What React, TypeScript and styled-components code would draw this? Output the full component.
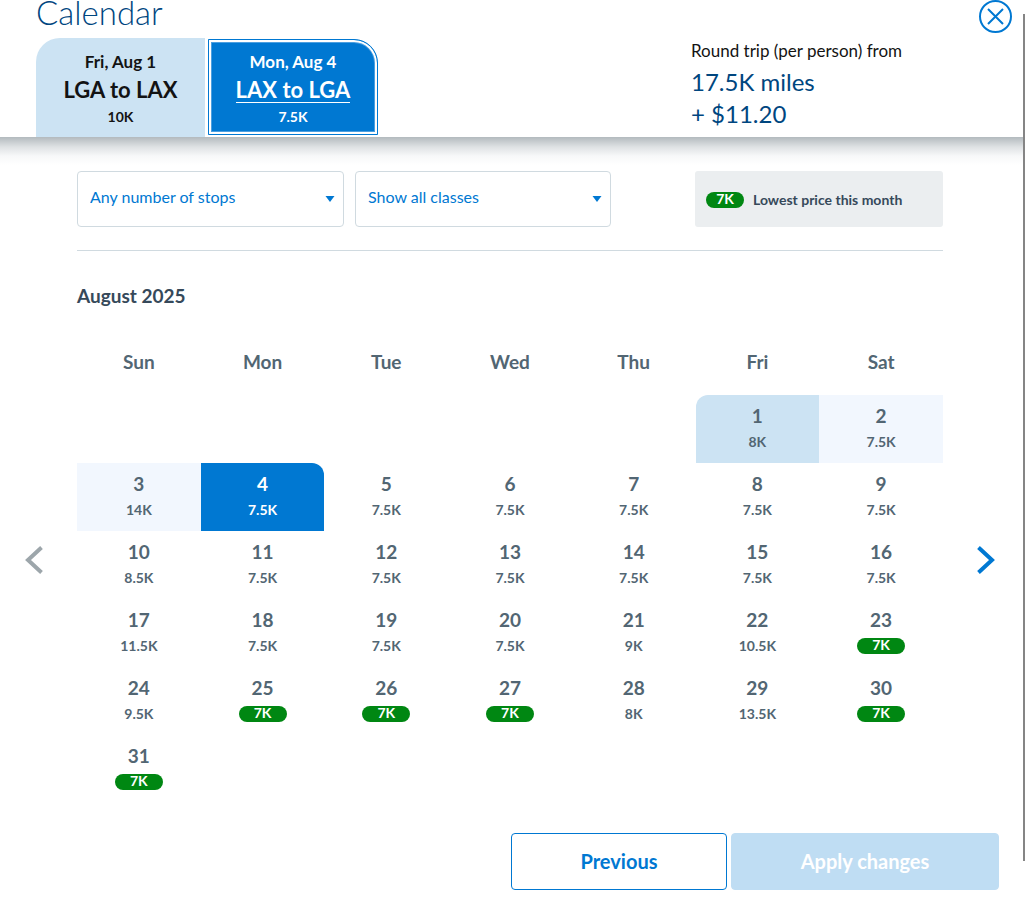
import React from "react";
import styled, { createGlobalStyle } from "styled-components";

const blue = "#0078d2";
const navy = "#00467f";
const slate = "#526673";
const ink = "#36495a";

const GlobalStyle = createGlobalStyle`
  * { box-sizing: border-box; }
  body { margin: 0; background: #fff; color: #131313; font-family: Lato, "Open Sans", sans-serif; }
  button, select { font-family: inherit; margin: 0; padding: 0; border: 0; background: none; cursor: pointer; }
`;

const Dialog = styled.div`
  position: relative;
  overflow: hidden;
`;

const Header = styled.header`
  display: flex;
  align-items: flex-start;
  padding: 0 13px 0 36px;
  background: #fff;
`;

const Heading = styled.div`
  flex: 1;
`;

const Title = styled.h1`
  margin: 0;
  padding-bottom: 14px;
  color: ${navy};
  font-size: 33px;
  font-weight: 300;
  line-height: 24px;
`;

const Tabs = styled.div`
  display: flex;
  align-items: flex-start;
  gap: 3px;
`;

const Tab = styled.button<{ $active?: boolean }>`
  width: 169px;
  height: 99px;
  padding-top: 12px;
  display: flex;
  flex-direction: column;
  align-items: center;
  color: ${(p) => (p.$active ? "#fff" : "#131313")};
  background: ${(p) => (p.$active ? blue : "#cce3f3")};
  border-radius: ${(p) => (p.$active ? "0 24px 0 0" : "24px 0 0 0")};
  ${(p) =>
    p.$active &&
    `
    width: 170px;
    height: 96px;
    margin-top: 1px;
    padding-top: 10px;
    border: 1px solid ${blue};
    box-shadow: inset 0 0 0 2px #fff, inset 0 0 0 3px #4c9fe0;
  `}
`;

const TabDate = styled.span`
  font-size: 17px;
  font-weight: 700;
  line-height: 24px;
`;

const TabRoute = styled.span<{ $active?: boolean }>`
  margin-top: 4px;
  border-bottom: 1px solid ${(p) => (p.$active ? "#fff" : "transparent")};
  font-size: 22px;
  font-weight: 700;
  line-height: 24px;
`;

const TabPrice = styled.span`
  margin-top: 4px;
  font-size: 14px;
  font-weight: 700;
  line-height: 20px;
`;

const Fare = styled.div`
  width: 288px;
  padding-top: 39px;
`;

const FareLabel = styled.div`
  font-size: 17px;
  line-height: 24px;
`;

const FareAmount = styled.div`
  padding-top: 3px;
  color: ${navy};
  font-size: 24px;
  line-height: 32px;
`;

const CloseButton = styled.button`
  width: 33px;
  height: 33px;
`;

const Glyph = styled.svg`
  display: block;
`;

const Main = styled.main`
  padding: 34px 82px 0 77px;
  background: linear-gradient(#b3babe, #dfe2e4 10px, #f7f8f9 19px, #fff 28px);
`;

const Filters = styled.div`
  display: flex;
  gap: 11px;
  padding-bottom: 23px;
  border-bottom: 1px solid #d0dae0;
`;

const Field = styled.label<{ $width: number }>`
  position: relative;
  width: ${(p) => p.$width}px;
`;

const Select = styled.select`
  appearance: none;
  width: 100%;
  height: 56px;
  padding: 0 32px 6px 12px;
  border: 1px solid #d0dae0;
  border-radius: 4px;
  background: #fff;
  color: ${blue};
  font-size: 16px;
`;

const Caret = styled.svg`
  position: absolute;
  right: 9px;
  top: 25px;
  pointer-events: none;
`;

const Legend = styled.div`
  display: flex;
  align-items: center;
  gap: 9px;
  width: 248px;
  height: 56px;
  margin-left: auto;
  padding-left: 11px;
  border-radius: 3px;
  background: #ebeef0;
  color: ${ink};
  font-size: 14px;
  font-weight: 700;
`;

const Pill = styled.span<{ $width: number }>`
  display: block;
  width: ${(p) => p.$width}px;
  height: 16px;
  margin: 0 auto;
  border-radius: 8px;
  background: #008712;
  color: #fff;
  font-size: 14px;
  font-weight: 700;
  line-height: 14px;
  text-align: center;
`;

const LegendPill = styled(Pill)`
  margin: 2px 0 0;
`;

const Month = styled.h2`
  margin: 33px 0 9px;
  color: ${ink};
  font-size: 19px;
  font-weight: 700;
  line-height: 24px;
`;

const Pager = styled.section`
  display: grid;
  grid-template-columns: 77px minmax(0, 1fr) 82px;
  align-items: center;
`;

const ArrowButton = styled.button<{ $side: "left" | "right" }>`
  justify-self: ${(p) => (p.$side === "left" ? "end" : "start")};
  margin: ${(p) => (p.$side === "left" ? "0 34px 0 0" : "0 0 0 34px")};
`;

const Grid = styled.table`
  width: 100%;
  margin-top: 13px;
  table-layout: fixed;
  border-collapse: collapse;
  color: ${slate};
`;

const Weekday = styled.th`
  height: 65px;
  padding: 0 0 2px;
  font-size: 19px;
  font-weight: 700;
`;

type DayKind = "start" | "end" | "range" | "plain";

const dayFill: Record<DayKind, string> = {
  start: "#cce3f3",
  end: blue,
  range: "#f2f7fe",
  plain: "transparent",
};

const DayCell = styled.td`
  height: 68px;
  padding: 0;
`;

const Day = styled.button<{ $kind: DayKind }>`
  display: block;
  width: 100%;
  height: 68px;
  padding: 9px 0;
  text-align: center;
  background: ${(p) => dayFill[p.$kind]};
  color: ${(p) => (p.$kind === "end" ? "#fff" : slate)};
  border-radius: ${(p) => (p.$kind === "start" ? "12px 0 0 0" : p.$kind === "end" ? "0 12px 0 0" : "0")};
`;

const DayNumber = styled.span`
  display: block;
  height: 25px;
  font-size: 19px;
  font-weight: 700;
  line-height: 24px;
`;

const DayPrice = styled.span`
  display: block;
  font-size: 14px;
  font-weight: 700;
  line-height: 25px;
`;

const DayPill = styled(Pill)`
  margin: 5px auto 4px;
`;

const Footer = styled.footer`
  display: flex;
  justify-content: flex-end;
  gap: 4px;
  padding: 30px 26px 8px;
`;

const Action = styled.button<{ $primary?: boolean }>`
  width: ${(p) => (p.$primary ? 268 : 216)}px;
  height: 57px;
  padding-bottom: 2px;
  border: 1px solid ${(p) => (p.$primary ? "#bfddf3" : blue)};
  border-radius: 4px;
  background: ${(p) => (p.$primary ? "#bfddf3" : "#fff")};
  color: ${(p) => (p.$primary ? "#fff" : blue)};
  font-size: 20px;
  font-weight: 700;
`;

const ScrollThumb = styled.div`
  position: absolute;
  top: 14px;
  right: 0;
  bottom: 37px;
  width: 2px;
  background: #858585;
`;

const weekdays = ["Sun", "Mon", "Tue", "Wed", "Thu", "Fri", "Sat"];

const prices = [
  "8K", "7.5K",
  "14K", "7.5K", "7.5K", "7.5K", "7.5K", "7.5K", "7.5K",
  "8.5K", "7.5K", "7.5K", "7.5K", "7.5K", "7.5K", "7.5K",
  "11.5K", "7.5K", "7.5K", "7.5K", "9K", "10.5K", "7K",
  "9.5K", "7K", "7K", "7K", "8K", "13.5K", "7K",
  "7K",
];

const lowest = "7K";
const firstWeekday = 5;
const tripStart = 1;
const tripEnd = 4;

const weeks = Array.from({ length: 6 }, (_, w) =>
  Array.from({ length: 7 }, (_, d) => {
    const day = w * 7 + d - firstWeekday + 1;
    return day >= 1 && day <= prices.length ? day : null;
  })
);

function kindOf(day: number): DayKind {
  if (day === tripStart) return "start";
  if (day === tripEnd) return "end";
  return day > tripStart && day < tripEnd ? "range" : "plain";
}

function FilterSelect({ label, option, width }: { label: string; option: string; width: number }) {
  return (
    <Field $width={width}>
      <Select aria-label={label} defaultValue={option}>
        <option>{option}</option>
      </Select>
      <Caret width="10" height="6" viewBox="0 0 10 6" aria-hidden="true">
        <path d="M0.5 0h9L5 6z" fill={blue} />
      </Caret>
    </Field>
  );
}

export default function App() {
  return (
    <Dialog role="dialog" aria-label="Calendar">
      <GlobalStyle />
      <Header>
        <Heading>
          <Title>Calendar</Title>
          <Tabs>
            <Tab type="button">
              <TabDate>Fri, Aug 1</TabDate>
              <TabRoute>LGA to LAX</TabRoute>
              <TabPrice>10K</TabPrice>
            </Tab>
            <Tab type="button" $active>
              <TabDate>Mon, Aug 4</TabDate>
              <TabRoute $active>LAX to LGA</TabRoute>
              <TabPrice>7.5K</TabPrice>
            </Tab>
          </Tabs>
        </Heading>
        <Fare>
          <FareLabel>Round trip (per person) from</FareLabel>
          <FareAmount>
            17.5K miles
            <br />+ $11.20
          </FareAmount>
        </Fare>
        <CloseButton type="button" aria-label="Close">
          <Glyph width="33" height="33" viewBox="0 0 33 33" fill="none" stroke={blue} strokeWidth="2">
            <circle cx="16.5" cy="16.5" r="15.5" />
            <path d="M9 9l15 15M24 9L9 24" />
          </Glyph>
        </CloseButton>
      </Header>

      <Main>
        <Filters>
          <FilterSelect label="Stops" option="Any number of stops" width={267} />
          <FilterSelect label="Class" option="Show all classes" width={256} />
          <Legend>
            <LegendPill $width={38}>{lowest}</LegendPill>
            Lowest price this month
          </Legend>
        </Filters>
        <Month>August 2025</Month>
      </Main>

      <Pager>
        <ArrowButton type="button" $side="left" aria-label="Previous month">
          <Glyph width="18" height="28" viewBox="0 0 18 28" fill="none" stroke="#9da6ab" strokeWidth="4">
            <path d="M16.5 1.5L3 14L16.5 26.5" />
          </Glyph>
        </ArrowButton>
        <Grid>
          <thead>
            <tr>
              {weekdays.map((name) => (
                <Weekday key={name} scope="col">{name}</Weekday>
              ))}
            </tr>
          </thead>
          <tbody>
            {weeks.map((week, w) => (
              <tr key={w}>
                {week.map((day, d) => (
                  <DayCell key={d}>
                    {day !== null && (
                      <Day type="button" $kind={kindOf(day)}>
                        <DayNumber>{day}</DayNumber>
                        {prices[day - 1] === lowest ? (
                          <DayPill $width={48}>{lowest}</DayPill>
                        ) : (
                          <DayPrice>{prices[day - 1]}</DayPrice>
                        )}
                      </Day>
                    )}
                  </DayCell>
                ))}
              </tr>
            ))}
          </tbody>
        </Grid>
        <ArrowButton type="button" $side="right" aria-label="Next month">
          <Glyph width="18" height="28" viewBox="0 0 18 28" fill="none" stroke={blue} strokeWidth="4">
            <path d="M1.5 1.5L15 14L1.5 26.5" />
          </Glyph>
        </ArrowButton>
      </Pager>

      <Footer>
        <Action type="button">Previous</Action>
        <Action type="button" $primary>Apply changes</Action>
      </Footer>
      <ScrollThumb />
    </Dialog>
  );
}
